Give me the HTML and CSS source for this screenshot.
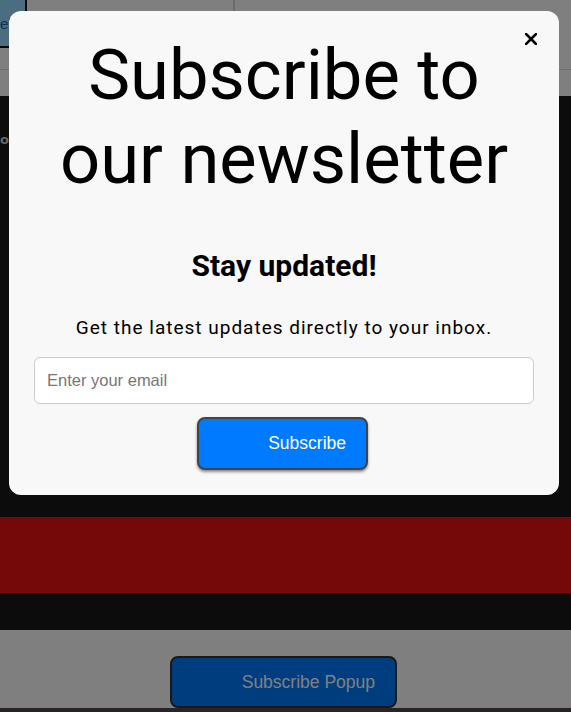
FILE: index.html
```html
<!DOCTYPE html>
<html lang="en">
<head>
    <meta charset="UTF-8">
    <meta name="viewport" content="width=device-width, initial-scale=1.0">
    <title>Newsletter</title>
    <link rel="stylesheet" href="styles.css">
</head>
<body>

    <!-- Page behind the popup -->
    <header class="site-header">
        <div class="header-row">
            <button class="cancel-button">el|</button>
            <div class="header-cell"></div>
        </div>
    </header>

    <section class="dark-section">
        <p class="side-text">o</p>
        <div class="dark-fill"></div>
        <div class="red-band"></div>
        <div class="dark-gap"></div>
    </section>

    <section class="light-section">
        <button class="popup-button">Subscribe Popup</button>
    </section>
    <footer class="site-footer"></footer>

    <!-- Popup -->
    <div class="overlay">
        <div class="modal">
            <button class="close-button" aria-label="Close">
                <svg width="12" height="12" viewBox="0 0 12 12">
                    <path d="M1 1 L11 11 M11 1 L1 11" stroke="#000" stroke-width="2.6" stroke-linecap="square"/>
                </svg>
            </button>
            <h1>Subscribe to our newsletter</h1>
            <h2>Stay updated!</h2>
            <p class="lead">Get the latest updates directly to your inbox.</p>
            <form class="subscribe-form">
                <input type="email" placeholder="Enter your email">
                <button type="submit" class="subscribe-button">Subscribe</button>
            </form>
        </div>
    </div>

</body>
</html>
```

FILE: styles.css
```css
/* --- General Setup --- */
:root {
    --primary-color: #007bff;
    --text-color: #000;
    --dark-bg: #181818;
    --red-bg: #ea1212;
}

body {
    margin: 0;
    font-family: 'Roboto', sans-serif;
    background-color: #fff;
    height: 712px;
    overflow: hidden;
}

/* --- Page behind --- */
.site-header {
    height: 96px;
    background-color: #fff;
}

.header-row {
    display: flex;
    height: 70px;
    border-bottom: 1px solid #dcdcdc;
    box-sizing: border-box;
}

.cancel-button {
    height: 48px;
    width: 27px;
    padding: 0;
    text-align: left;
    background-color: #95ddff;
    border: 2px solid #111;
    border-top: none;
    border-left: none;
    border-bottom-right-radius: 14px;
    color: #1f5fb4;
    font-family: 'Liberation Sans', sans-serif;
    font-size: 15px;
    white-space: nowrap;
}

.header-cell {
    width: 206px;
    border-right: 2px solid #d4d4d4;
    height: 40px;
}

.dark-section {
    background-color: var(--dark-bg);
    height: 534px;
    display: flex;
    flex-direction: column;
}

.side-text {
    margin: 36px 0 0;
    color: #ccc;
    font-size: 13px;
    font-weight: 600;
    font-family: 'DejaVu Sans', sans-serif;
}

.dark-fill {
    flex: 1;
}

.red-band {
    height: 76px;
    background-color: var(--red-bg);
}

.dark-gap {
    height: 37px;
}

.light-section {
    height: 78px;
    background-color: #fff;
    display: flex;
    justify-content: center;
    align-items: flex-end;
}

.popup-button {
    width: 227px;
    height: 52px;
    margin-right: 4px;
    padding: 0 20px 0 50px;
    text-align: right;
    white-space: nowrap;
    background-color: var(--primary-color);
    border: 2px solid #333;
    border-radius: 8px;
    color: #fff;
    font-family: 'Liberation Sans', sans-serif;
    font-size: 17.5px;
}

.site-footer {
    height: 10px;
    background-color: #55484d;
}

/* --- Overlay & Popup --- */
.overlay {
    position: fixed;
    inset: 0;
    background-color: rgba(0, 0, 0, 0.5);
    display: flex;
    align-items: flex-start;
    padding: 11px 0 0 9px;
}

.modal {
    position: relative;
    width: 550px;
    box-sizing: border-box;
    padding: 22px 25px 25px;
    background-color: #f8f8f8;
    border-radius: 12px;
    text-align: center;
    color: var(--text-color);
}

.close-button {
    position: absolute;
    top: 22px;
    right: 22px;
    padding: 0;
    border: none;
    background: none;
    cursor: pointer;
    line-height: 0;
}

h1 {
    margin: 0;
    font-size: 70.5px;
    font-weight: 400;
    line-height: 84px;
}

h2 {
    margin: 47px 0 0;
    font-size: 30px;
    font-weight: 700;
    line-height: 35px;
}

.lead {
    margin: 34px 0 0;
    font-size: 19px;
    line-height: 22px;
    letter-spacing: 1px;
}

/* --- Form Elements --- */
.subscribe-form {
    margin-top: 18px;
    display: flex;
    flex-direction: column;
    align-items: center;
    gap: 13px;
}

input {
    width: 100%;
    height: 47px;
    padding: 0 12px;
    border: 1px solid #ccc;
    border-radius: 6px;
    box-sizing: border-box;
    background-color: #fff;
    font-family: 'Liberation Sans', sans-serif;
    font-size: 16.5px;
}

input::placeholder {
    color: #777;
}

.subscribe-button {
    width: 171px;
    height: 53px;
    margin-left: -3px;
    padding: 0 20px 0 50px;
    text-align: right;
    background-color: var(--primary-color);
    border: 2px solid #444;
    border-radius: 8px;
    box-shadow: 0 2px 3px rgba(0, 0, 0, 0.45);
    color: #fff;
    font-family: 'Liberation Sans', sans-serif;
    font-size: 17.5px;
    cursor: pointer;
}
```
